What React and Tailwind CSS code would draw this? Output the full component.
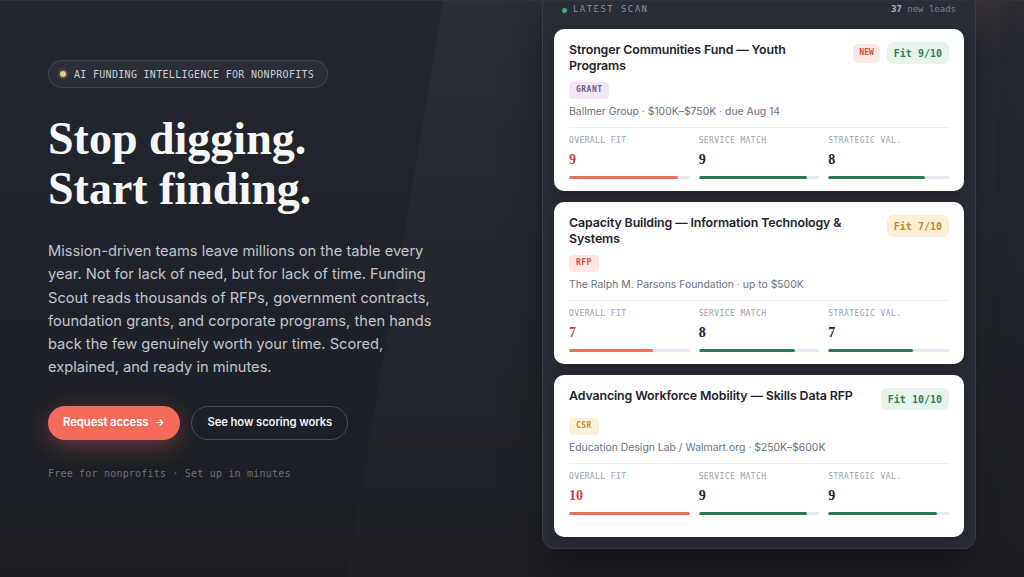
import React from "react";

const MONO = "font-['DejaVu_Sans_Mono',monospace]";
const SERIF = "font-['Liberation_Serif',serif]";

const LEADS = [
  {
    title: "Stronger Communities Fund — Youth Programs",
    isNew: true,
    fit: 9,
    fitTone: "green",
    tag: "GRANT",
    tagClass: "bg-[#f1e7f6] text-[#7b5a90]",
    meta: "Ballmer Group · $100K–$750K · due Aug 14",
    scores: [9, 9, 8],
  },
  {
    title: "Capacity Building — Information Technology & Systems",
    isNew: false,
    fit: 7,
    fitTone: "amber",
    tag: "RFP",
    tagClass: "bg-[#fde7e3] text-[#cc5046]",
    meta: "The Ralph M. Parsons Foundation · up to $500K",
    scores: [7, 8, 7],
  },
  {
    title: "Advancing Workforce Mobility — Skills Data RFP",
    isNew: false,
    fit: 10,
    fitTone: "green",
    tag: "CSR",
    tagClass: "bg-[#fcf0d8] text-[#c48b2f]",
    meta: "Education Design Lab / Walmart.org · $250K–$600K",
    scores: [10, 9, 9],
  },
];

const METRICS = ["Overall fit", "Service match", "Strategic val."];

function FitBadge({ fit, tone }) {
  const toneClass =
    tone === "green"
      ? "bg-[#e6f4ec] text-[#2f7c54]"
      : "bg-[#fcefd4] text-[#b9883a]";
  return (
    <span
      className={`${MONO} ${toneClass} h-[22px] px-[7px] rounded-[6px] text-[10px] font-semibold flex items-center`}
    >
      Fit {fit}/10
    </span>
  );
}

function Metric({ label, value, primary }) {
  return (
    <div>
      <div className={`${MONO} text-[8px] leading-[10px] tracking-[0.05em] uppercase text-[#9ba1ab]`}>
        {label}
      </div>
      <div
        className={`${SERIF} mt-[7px] text-[14px] leading-[14px] font-bold ${
          primary ? "text-[#c8463b]" : "text-[#1f232c]"
        }`}
      >
        {value}
      </div>
      <div className="mt-[9px] h-[3px] rounded-full bg-[#e6e9ed] overflow-hidden">
        <div
          className={`h-full rounded-full ${primary ? "bg-[#ee6e5f]" : "bg-[#2c7a55]"}`}
          style={{ width: `${value * 10}%` }}
        />
      </div>
    </div>
  );
}

function LeadCard({ lead }) {
  return (
    <div className="h-[162px] bg-white rounded-[10px] px-[15px] pt-[13px] shadow-[0_4px_14px_rgba(0,0,0,0.25)]">
      <div className="flex items-start gap-[12px]">
        <h3 className="flex-1 text-[12.4px] leading-[16px] font-semibold tracking-[-0.01em] text-[#1f232c]">
          {lead.title}
        </h3>
        <div className="flex items-center gap-[7px] shrink-0">
          {lead.isNew && (
            <span
              className={`${MONO} h-[19px] px-[6px] rounded-[5px] bg-[#fde8e4] text-[#d04b40] text-[8px] font-bold flex items-center`}
            >
              NEW
            </span>
          )}
          <FitBadge fit={lead.fit} tone={lead.fitTone} />
        </div>
      </div>
      <span
        className={`${MONO} ${lead.tagClass} mt-[7px] inline-flex items-center h-[17px] px-[7px] rounded-[4px] text-[8px] font-bold tracking-[0.06em]`}
      >
        {lead.tag}
      </span>
      <p className="mt-[5px] text-[10.4px] leading-[16px] text-[#6b7280]">{lead.meta}</p>
      <div className="mt-[7px] border-t border-[#edf0f3] pt-[8px] grid grid-cols-3 gap-[9px]">
        {METRICS.map((m, i) => (
          <Metric key={m} label={m} value={lead.scores[i]} primary={i === 0} />
        ))}
      </div>
    </div>
  );
}

export default function App() {
  return (
    <div className="relative h-[577px] overflow-hidden bg-gradient-to-b from-[#24272f] to-[#1b1d23] font-['Inter',sans-serif] border-t border-[#30333b]">
      {/* diagonal sheen behind the scan panel */}
      <div className="absolute inset-0 bg-gradient-to-b from-white/[0.035] to-white/[0.01] [clip-path:polygon(443px_0,100%_0,100%_100%,347px_100%)]" />
      <div className="absolute inset-0 bg-black/[0.06] [clip-path:polygon(1000px_0,100%_0,100%_100%,985px_100%)]" />
      {/* warm glow peeking over the panel */}
      <div className="absolute -top-[60px] left-[840px] w-[160px] h-[70px] rounded-full bg-[#e0604f]/20 blur-[30px]" />

      <div className="relative flex justify-between items-start px-[48px]">
        {/* hero copy */}
        <div className="pt-[58px] w-[400px]">
          <div className="inline-flex items-center gap-[8px] h-[28px] pl-[11px] pr-[13px] rounded-full border border-white/10 bg-white/[0.04]">
            <span className="w-[6px] h-[6px] rounded-full bg-[#e3cb92] shadow-[0_0_0_2px_rgba(227,203,146,0.2)]" />
            <span className={`${MONO} text-[10px] tracking-[0.03em] text-[#cdd0d6]`}>
              AI FUNDING INTELLIGENCE FOR NONPROFITS
            </span>
          </div>

          <h1 className={`${SERIF} mt-[26px] text-[46px] leading-[50px] font-bold text-[#f7f7f5]`}>
            Stop digging.
            <br />
            Start finding.
          </h1>

          <p className="mt-[26px] w-[400px] text-[14.65px] leading-[23.3px] text-[#c3c6cd]">
            Mission-driven teams leave millions on the table every year. Not for lack of need,
            but for lack of time. Funding Scout reads thousands of RFPs, government contracts,
            foundation grants, and corporate programs, then hands back the few genuinely worth
            your time. Scored, explained, and ready in minutes.
          </p>

          <div className="mt-[26px] flex items-center gap-[11px]">
            <button className="h-[34px] px-[15px] rounded-full bg-[#f36b5b] text-white text-[11.4px] font-semibold tracking-[-0.01em] flex items-center gap-[6px] shadow-[0_6px_22px_rgba(243,107,91,0.35)]">
              Request access
              <svg width="11" height="11" viewBox="0 0 24 24" fill="none" stroke="currentColor" strokeWidth="2.4" strokeLinecap="round" strokeLinejoin="round">
                <path d="M5 12h14" />
                <path d="m13 6 6 6-6 6" />
              </svg>
            </button>
            <button className="h-[34px] px-[15px] rounded-full border border-[#4a4e57] text-[#eef0f3] text-[11.3px] font-semibold tracking-[-0.01em]">
              See how scoring works
            </button>
          </div>

          <p className={`${MONO} mt-[26px] text-[10px] tracking-[0.02em] text-[#6c717b]`}>
            Free for nonprofits · Set up in minutes
          </p>
        </div>

        {/* latest scan panel */}
        <div className="-mt-[9px] w-[434px] rounded-[12px] border border-[#3a3d46] bg-[#2a2d35] p-[11px] shadow-[0_20px_40px_rgba(0,0,0,0.35)]">
          <div className="flex items-center justify-between px-[8px] h-[12px]">
            <div className="flex items-center gap-[6px]">
              <span className="w-[5px] h-[5px] rounded-full bg-[#3fae6f]" />
              <span className={`${MONO} text-[9px] tracking-[0.16em] text-[#8b909a]`}>LATEST SCAN</span>
            </div>
            <span className={`${MONO} text-[9px] text-[#7d828c]`}>
              <span className="font-bold text-[#b3b7bf]">37</span> new leads
            </span>
          </div>
          <div className="mt-[13px] flex flex-col gap-[11px]">
            {LEADS.map((lead) => (
              <LeadCard key={lead.title} lead={lead} />
            ))}
          </div>
        </div>
      </div>
    </div>
  );
}
